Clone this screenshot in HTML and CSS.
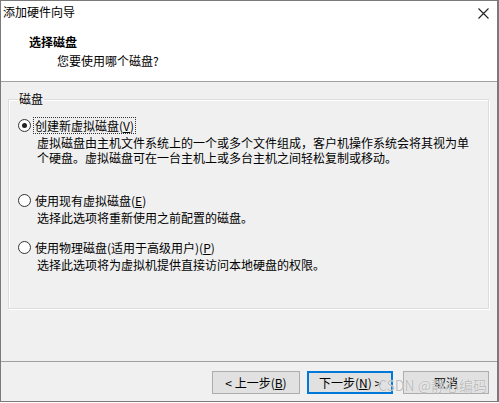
FILE: index.html
```html
<!DOCTYPE html>
<html lang="zh-CN">
  <head>
    <meta charset="UTF-8" />
    <title>添加硬件向导</title>
    <link rel="stylesheet" href="styles.css">
  </head>
  <body>
    <div class="window">
      <div class="titlebar">
        <span class="title">添加硬件向导</span>
        <svg class="close" width="11" height="11" viewBox="0 0 11 11">
          <path d="M0.5 0.5 L10.5 10.5 M10.5 0.5 L0.5 10.5" stroke="#222" stroke-width="1.1" fill="none" />
        </svg>
      </div>
      <div class="header">
        <div class="head-title">选择磁盘</div>
        <div class="head-sub">您要使用哪个磁盘?</div>
      </div>
      <div class="main">
        <fieldset class="group">
          <legend>磁盘</legend>
          <div class="option">
            <div class="radio-row">
              <span class="radio checked"></span>
              <span class="label focus">创建新虚拟磁盘(<u>V</u>)</span>
            </div>
            <div class="desc">虚拟磁盘由主机文件系统上的一个或多个文件组成，客户机操作系统会将其视为单<br>个硬盘。虚拟磁盘可在一台主机上或多台主机之间轻松复制或移动。</div>
          </div>
          <div class="option second">
            <div class="radio-row">
              <span class="radio"></span>
              <span class="label">使用现有虚拟磁盘(<u>E</u>)</span>
            </div>
            <div class="desc">选择此选项将重新使用之前配置的磁盘。</div>
          </div>
          <div class="option third">
            <div class="radio-row">
              <span class="radio"></span>
              <span class="label">使用物理磁盘(适用于高级用户)(<u>P</u>)</span>
            </div>
            <div class="desc">选择此选项将为虚拟机提供直接访问本地硬盘的权限。</div>
          </div>
        </fieldset>
      </div>
      <div class="footer">
        <button class="btn back">&lt; 上一步(<u>B</u>)</button>
        <button class="btn default">下一步(<u>N</u>) &gt;</button>
        <button class="btn cancel">取消</button>
        <span class="watermark">CSDN @静心编码</span>
      </div>
    </div>
  </body>
</html>
```

FILE: styles.css
```css
body {
  margin: 0;
  background-color: #ffffff;
  font-family: "Noto Sans CJK SC", "Liberation Sans", sans-serif;
  font-size: 12px;
  color: #000000;
}

.window {
  width: 499px;
  height: 402px;
  box-sizing: border-box;
  border: 1px solid #7a7a7a;
  border-right-width: 2px;
  background-color: #f0f0f0;
  display: flex;
  flex-direction: column;
  position: relative;
}

.titlebar {
  height: 22px;
  background-color: #ffffff;
  display: flex;
  align-items: center;
  justify-content: space-between;
  padding: 0 8px 0 2px;
  line-height: 14px;
}

.close {
  margin-top: 2px;
}

.header {
  height: 59px;
  background-color: #ffffff;
  border-bottom: 1px solid #a0a0a0;
  padding: 11px 0 0 28px;
  box-sizing: border-box;
}

.head-title {
  font-weight: bold;
  line-height: 16px;
}

.head-sub {
  margin: 3px 0 0 28px;
  line-height: 16px;
}

.main {
  flex: 1;
  padding: 10px 8px 0 7px;
}

.group {
  margin: 0;
  padding: 10px 0 0 9px;
  height: 217px;
  box-sizing: border-box;
  border: 1px solid #dddddd;
  box-shadow: inset 1px 1px 0 #ffffff, 1px 1px 0 #ffffff;
}

.group legend {
  padding: 0 1px;
  margin-left: 0;
  line-height: 14px;
}

.radio-row {
  display: flex;
  align-items: center;
  height: 18px;
}

.radio {
  width: 11px;
  height: 11px;
  border: 1px solid #333333;
  border-radius: 50%;
  background-color: #ffffff;
  display: flex;
  align-items: center;
  justify-content: center;
  margin-right: 2px;
}

.radio.checked::after {
  content: "";
  width: 5px;
  height: 5px;
  border-radius: 50%;
  background-color: #222222;
}

.label {
  padding: 0 1px;
  line-height: 15px;
  border: 1px dotted transparent;
}

.label.focus {
  border-color: #333333;
}

.desc {
  padding: 1px 0 0 19px;
  line-height: 15px;
}

.second {
  margin-top: 26px;
}

.third {
  margin-top: 13px;
}

.footer {
  height: 40px;
  box-sizing: border-box;
  border-top: 1px solid #a0a0a0;
  display: flex;
  align-items: flex-start;
  justify-content: flex-end;
  padding: 9px 8px 0 0;
  position: relative;
}

.btn {
  width: 86px;
  height: 23px;
  background-color: #e1e1e1;
  border: 1px solid #adadad;
  font-family: "Noto Sans CJK SC", "Liberation Sans", sans-serif;
  font-size: 12px;
  color: #000000;
  padding: 0;
}

.btn.back {
  width: 88px;
}

.btn.default {
  margin-left: 7px;
  border-color: #0078d7;
  box-shadow: inset 0 0 0 1px #0078d7;
}

.btn.cancel {
  margin-left: 10px;
}

.watermark {
  position: absolute;
  right: 10px;
  top: 13px;
  font-size: 14px;
  color: rgba(170, 170, 170, 0.75);
  text-shadow: 0 0 1px #ffffff;
}
```
